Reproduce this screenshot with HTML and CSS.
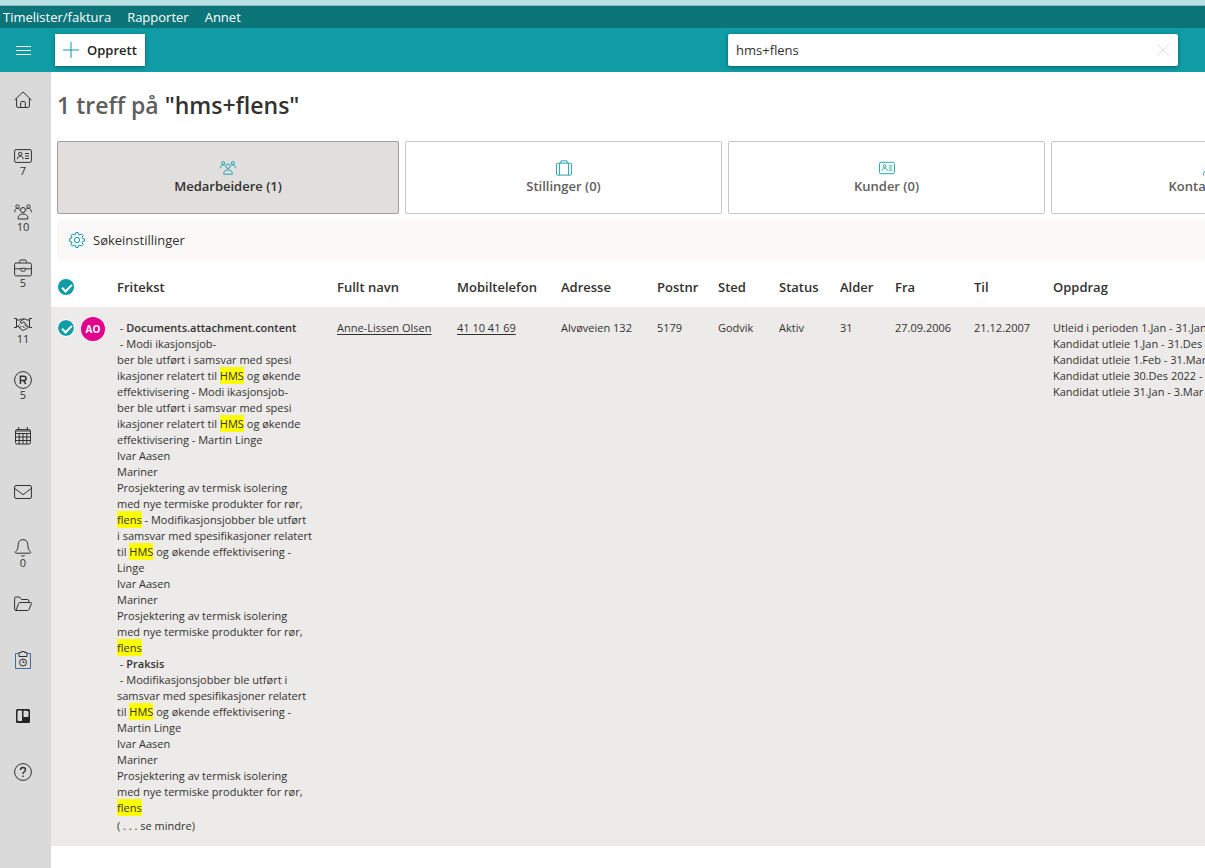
FILE: index.html
```
<!DOCTYPE html>
<html lang="no">

	<head>
		<meta charset="UTF-8">
		<meta name="viewport" content="width=device-width, initial-scale=1">
		<title>Søk</title>
		<link rel="stylesheet" href="styles.css">
	</head>

	<body>
		<!-- shared icons -->
		<svg class="defs" width="0" height="0">
			<symbol id="people" viewBox="0 0 18 18">
				<circle cx="9" cy="7" r="2.5" />
				<circle cx="3.5" cy="3.5" r="1.7" />
				<circle cx="14.5" cy="3.5" r="1.7" />
				<path d="M.6 9.2c0-2.6 1.2-3.8 3-3.8 1 0 1.700.4 2.200 1M17.400 9.200c0-2.600-1.200-3.800-3-3.800-1 0-1.700.4-2.200 1M4.200 16c-.5-2.700 1.400-5 4.800-5s5.300 2.300 4.800 5z" />
			</symbol>
			<symbol id="card" viewBox="0 0 18 18">
				<rect x=".6" y="2.600" width="16.800" height="12.800" rx="1.500" />
				<circle cx="6.300" cy="7" r="1.700" />
				<path d="M3.500 12.200c0-2 1-3 2.800-3s2.800 1 2.800 3M11 6.500h4M11 9h4M11 11.500h4" />
			</symbol>
		</svg>

		<div class="strip"></div>
		<nav class="menubar">
			<a href="#">Timelister/faktura</a>
			<a href="#">Rapporter</a>
			<a href="#">Annet</a>
		</nav>
		<header class="header">
			<button class="burger" aria-label="Meny">
				<svg width="15" height="11" viewBox="0 0 15 11"><path d="M0 1.500h15M0 5.500h15M0 9.500h15" /></svg>
			</button>
			<button class="create">
				<svg width="16" height="16" viewBox="0 0 16 16"><path d="M8 0v16M0 8h16" /></svg>
				Opprett
			</button>
			<div class="search">
				<input type="text" aria-label="Søk" value="hms+flens">
				<button aria-label="Tøm søk">
					<svg width="14" height="14" viewBox="0 0 14 14"><path d="M1 1l12 12M13 1L1 13" /></svg>
				</button>
			</div>
		</header>

		<div class="page">
			<nav class="sidebar">
				<a href="#" aria-label="Hjem">
					<svg viewBox="0 0 18 18"><path d="M.5 9L9 1l8.500 8M2.600 7.500v7.500q0 1.500 1.500 1.500h9.800q1.500 0 1.500-1.500V7.500M6.700 16.500v-5q0-1 1-1h2.600q1 0 1 1v5" /></svg>
				</a>
				<a href="#">
					<svg><use href="#card" /></svg>
					<span>7</span>
				</a>
				<a href="#">
					<svg><use href="#people" /></svg>
					<span>10</span>
				</a>
				<a href="#">
					<svg viewBox="0 0 18 18"><rect x=".6" y="4" width="16.800" height="12.900" rx="1.500" /><path d="M5.500 4V2.500q0-1.500 1.500-1.500h4q1.500 0 1.500 1.500V4M.6 9.800h6M11.400 9.800h6M6.600 9.300h4.800v1.200q0 1.700-1.700 1.700H8.300q-1.700 0-1.700-1.700z" /></svg>
					<span>5</span>
				</a>
				<a href="#">
					<svg viewBox="0 0 18 18"><path d="M0 3.500h2.500v9H0M18 3.500h-2.500v9H18M2.500 5h3l2-1h3.500l2 1h2.500M2.500 11.500h1.500l4 3.500q1.300 1 2.200-.3 1.400.4 1.900-.9 1.400 0 1.600-1.400l1.800-.9M10 4L6.200 6.500q-.2 2 1.800 1.700l2-1.400 4 5M8.800 11l1.800 2.200M10.500 9.500l2 2.300M4 11.500l1.500-2M5.600 13l1.700-2" /></svg>
					<span>11</span>
				</a>
				<a href="#">
					<svg viewBox="0 0 18 18"><circle cx="9" cy="9" r="8.400" /><path stroke-width="1.500" d="M6.400 13V5.200h3.200q2.500 0 2.500 2.200T9.600 9.600H6.400M9.600 9.600l2.200 3.400" /></svg>
					<span>5</span>
				</a>
				<a href="#" aria-label="Kalender">
					<svg viewBox="0 0 18 18"><rect x="1.500" y="2.600" width="15" height="14.400" rx="1.500" /><path d="M1.500 6.500h15M1.500 10h15M1.500 13.500h15M5.200 6.500V17M9 6.500V17M12.800 6.500V17M4.700 0v3M13.300 0v3M2 4h14" /></svg>
				</a>
				<a href="#" aria-label="E-post">
					<svg viewBox="0 0 18 18"><rect x=".6" y="2.500" width="16.800" height="13" rx="1.500" /><path d="M.8 5.500L9 11.700l8.200-6.200" /></svg>
				</a>
				<a href="#">
					<svg viewBox="0 0 18 18"><path d="M9 .6c-3 0-4.800 2.200-4.800 5 0 4-1 5.400-2.600 7.200-.5.700-.2 1.400.6 1.400h13.600c.8 0 1.100-.7.6-1.400-1.600-1.800-2.600-3.200-2.600-7.200 0-2.800-1.800-5-4.800-5zM7.300 16.500q1.700 1.500 3.400 0" /></svg>
					<span>0</span>
				</a>
				<a href="#" aria-label="Filer">
					<svg viewBox="0 0 18 18"><path d="M2 15.500h11.700q1 0 1.300-.8l2.400-6q.3-1.200-.8-1.200H6q-1.200 0-1.500 1L2 15.500q-1.400 0-1.400-1.500V3.500Q.6 2 2 2h3.500l2 2.500h6q1.400 0 1.400 1.500v1.500" /></svg>
				</a>
				<a href="#" aria-label="Timer">
					<svg viewBox="0 0 18 18"><path class="board" d="M4.500 2.500H1.500v15h15v-15h-3" /><path d="M5 5.500v-4h2.500v-1h3v1H13v4z" /><circle cx="9" cy="11.500" r="3.500" /><path d="M9 9.500v2h1.700" /></svg>
				</a>
				<a href="#" aria-label="Tavle">
					<svg viewBox="0 0 18 18"><path fill-rule="evenodd" class="solid" d="M3.500 2h11Q16 2 16 3.500v11q0 1.500-1.500 1.500h-11Q2 16 2 14.500v-11Q2 2 3.500 2zm1 1.500q-1 0-1 1v8.500q0 1 1 1h3q.5 0 .5-.5V4q0-.5-.5-.5zm5.500 0q-.5 0-.5.500v5.500q0 .5.5.5h3.500q1 0 1-1v-4q0-1-1-1z" /></svg>
				</a>
				<a href="#" aria-label="Hjelp">
					<svg viewBox="0 0 18 18"><circle cx="9" cy="9" r="8.400" /><path stroke-width="1.400" d="M6.500 7q0-2.500 2.500-2.500T11.500 7Q11.500 8 10 9 9 9.700 9 11M9 12.500V14" /></svg>
				</a>
			</nav>

			<main class="main">
				<h1>1 treff på <b>"hms+flens"</b></h1>

				<div class="tabs">
					<button class="tab active">
						<svg><use href="#people" /></svg>
						Medarbeidere (1)
					</button>
					<button class="tab">
						<svg viewBox="0 0 18 18"><rect x=".6" y="3.600" width="16.800" height="13.400" rx="1" /><path d="M5.500 3.500V1h7v2.500M4 3.500V17M14 3.500V17" /></svg>
						Stillinger (0)
					</button>
					<button class="tab">
						<svg><use href="#card" /></svg>
						Kunder (0)
					</button>
					<button class="tab">
						<svg viewBox="0 0 18 18"><circle cx="9" cy="5" r="4.200" /><path d="M1.500 17.500c0-4.500 2.500-7 7.500-7s7.500 2.500 7.500 7" /></svg>
						Kontakter (0)
					</button>
				</div>

				<button class="settings">
					<svg width="16" height="16" viewBox="0 0 16 16"><path d="M6.800.6h2.400l.4 1.800 1.300.5 1.600-1 1.600 1.600-1 1.600.5 1.300 1.800.4v2.400l-1.800.4-.5 1.300 1 1.600-1.600 1.600-1.600-1-1.300.5-.4 1.800H6.800l-.4-1.800-1.300-.5-1.600 1-1.600-1.600 1-1.600-.5-1.300L.6 9.200V6.800l1.800-.4.5-1.300-1-1.600 1.600-1.600 1.600 1 1.300-.5z" /><circle cx="8" cy="8" r="2.600" /></svg>
					Søkeinstillinger
				</button>

				<table class="list">
					<colgroup>
						<col class="w-check">
						<col class="w-avatar">
						<col class="w-text">
						<col class="w-name">
						<col class="w-phone">
						<col class="w-address">
						<col class="w-small">
						<col class="w-small">
						<col class="w-small">
						<col class="w-age">
						<col class="w-date">
						<col class="w-date">
						<col>
					</colgroup>
					<thead>
						<tr>
							<th><input type="checkbox" aria-label="Velg alle" checked></th>
							<th></th>
							<th>Fritekst</th>
							<th>Fullt navn</th>
							<th>Mobiltelefon</th>
							<th>Adresse</th>
							<th>Postnr</th>
							<th>Sted</th>
							<th>Status</th>
							<th>Alder</th>
							<th>Fra</th>
							<th>Til</th>
							<th>Oppdrag</th>
						</tr>
					</thead>
					<tbody>
						<tr>
							<td><input type="checkbox" aria-label="Velg Anne-Lissen Olsen" checked></td>
							<td><span class="avatar">AO</span></td>
							<td>
								&nbsp;- <b>Documents.attachment.content</b><br>
								&nbsp;- Modi ikasjonsjob-<br>
								ber ble utført i samsvar med spesi<br>
								ikasjoner relatert til <mark>HMS</mark> og økende<br>
								effektivisering - Modi ikasjonsjob-<br>
								ber ble utført i samsvar med spesi<br>
								ikasjoner relatert til <mark>HMS</mark> og økende<br>
								effektivisering - Martin Linge<br>
								Ivar Aasen<br>
								Mariner<br>
								Prosjektering av termisk isolering<br>
								med nye termiske produkter for rør,<br>
								<mark>flens</mark> - Modifikasjonsjobber ble utført<br>
								i samsvar med spesifikasjoner relatert<br>
								til <mark>HMS</mark> og økende effektivisering -<br>
								Linge<br>
								Ivar Aasen<br>
								Mariner<br>
								Prosjektering av termisk isolering<br>
								med nye termiske produkter for rør,<br>
								<mark>flens</mark><br>
								&nbsp;- <b>Praksis</b><br>
								&nbsp;- Modifikasjonsjobber ble utført i<br>
								samsvar med spesifikasjoner relatert<br>
								til <mark>HMS</mark> og økende effektivisering -<br>
								Martin Linge<br>
								Ivar Aasen<br>
								Mariner<br>
								Prosjektering av termisk isolering<br>
								med nye termiske produkter for rør,<br>
								<mark>flens</mark>
								<button class="less">( . . . se mindre)</button>
							</td>
							<td><a href="#">Anne-Lissen Olsen</a></td>
							<td><a href="#">41 10 41 69</a></td>
							<td>Alvøveien 132</td>
							<td>5179</td>
							<td>Godvik</td>
							<td>Aktiv</td>
							<td>31</td>
							<td>27.09.2006</td>
							<td>21.12.2007</td>
							<td>
								Utleid i perioden 1.Jan - 31.Jan<br>
								Kandidat utleie 1.Jan - 31.Des<br>
								Kandidat utleie 1.Feb - 31.Mar<br>
								Kandidat utleie 30.Des 2022 - 31.Jan<br>
								Kandidat utleie 31.Jan - 3.Mar
							</td>
						</tr>
					</tbody>
				</table>
			</main>
		</div>
	</body>

</html>
```
FILE: styles.css
```
* {
	box-sizing: border-box;
	margin: 0;
	padding: 0;
}

body {
	min-height: 100vh;
	display: flex;
	flex-direction: column;
	overflow-x: hidden;
	background: #fff;
	color: #323130;
	font-family: "Segoe UI", "Open Sans", sans-serif;
	font-size: 13px;
}

button,
input {
	border: 0;
	background: none;
	color: inherit;
	font: inherit;
}

svg {
	display: block;
	fill: none;
	stroke: currentColor;
}

.defs {
	position: absolute;
}

/* top */
.strip {
	height: 6px;
	background: #b8e1e6;
	border-bottom: 1px solid #8fb9bc;
}

.menubar {
	height: 22px;
	padding: 0 3px;
	display: flex;
	gap: 16px;
	background: #0b757a;
	line-height: 22px;
}

.menubar a {
	color: #fff;
	text-decoration: none;
}

.header {
	height: 44px;
	padding-right: 27px;
	display: flex;
	align-items: center;
	background: #0f9ca5;
}

.burger {
	width: 55px;
	height: 44px;
	padding-left: 16px;
	color: #fff;
}

.create {
	height: 32px;
	padding: 0 8px;
	display: flex;
	align-items: center;
	gap: 8px;
	background: #fff;
	color: #201f1e;
	font-weight: 600;
	box-shadow: 0 1px 4px rgba(0, 0, 0, .4);
}

.create svg {
	color: #0f9ca5;
}

.search {
	width: 450px;
	height: 32px;
	margin-left: auto;
	padding: 0 8px;
	display: flex;
	align-items: center;
	background: #fff;
	border-radius: 2px;
	box-shadow: 0 1px 4px rgba(0, 0, 0, .4);
}

.search input {
	flex: 1;
	outline: 0;
}

.search button {
	color: #e1dfdd;
}

.page {
	flex: 1;
	display: flex;
}

/* sidebar */
.sidebar {
	flex: none;
	width: 51px;
	padding-right: 5px;
	background: #dadada;
}

.sidebar a {
	height: 56px;
	padding-top: 19px;
	display: flex;
	flex-direction: column;
	align-items: center;
	color: #323130;
	font-size: 11px;
	line-height: 12px;
	text-decoration: none;
}

.sidebar svg {
	width: 18px;
	height: 18px;
}

.sidebar .board {
	stroke: #3c6ea0;
}

.sidebar .solid {
	fill: #252423;
	stroke: none;
}

/* content */
.main {
	flex: 1;
	min-width: 0;
	overflow: hidden;
}

h1 {
	padding: 17px 6px 20px;
	color: #605e5c;
	font-size: 23px;
	line-height: 32px;
	font-weight: 600;
}

h1 b {
	color: #323130;
	font-weight: 600;
}

.tabs {
	padding-left: 6px;
	display: grid;
	grid-template-columns: minmax(342px, 1fr) repeat(3, minmax(317px, 1fr));
	gap: 6px;
}

.tab {
	height: 73px;
	display: flex;
	flex-direction: column;
	align-items: center;
	justify-content: center;
	border: 1px solid #c8c6c4;
	border-radius: 2px;
	color: #605e5c;
	font-weight: 600;
	line-height: 20px;
}

.tab svg {
	width: 16px;
	height: 16px;
	color: #0f9ca5;
}

.tab.active {
	background: #e1dfdd;
	border-color: #a19f9d;
	color: #323130;
}

.settings {
	width: 100%;
	height: 40px;
	margin: 6px 6px 7px;
	padding: 0 12px;
	display: flex;
	align-items: center;
	gap: 8px;
	background: #faf9f8;
	border-radius: 2px;
}

.settings svg {
	color: #0f9ca5;
}

/* list */
.list {
	width: 100%;
	table-layout: fixed;
	border-collapse: collapse;
	text-align: left;
	white-space: nowrap;
}

.w-check { width: 30px; }
.w-avatar { width: 36px; }
.w-text { width: 220px; }
.w-name { width: 120px; }
.w-phone { width: 104px; }
.w-address { width: 96px; }
.w-small { width: 61px; }
.w-age { width: 55px; }
.w-date { width: 79px; }

.list th {
	height: 40px;
	font-weight: 600;
}

.list td {
	padding: 13px 0 12px;
	background: #edebe9;
	font-size: 11px;
	line-height: 16px;
	vertical-align: top;
}

.list b {
	font-weight: 600;
}

.list a {
	color: inherit;
	text-underline-offset: 2px;
}

.list mark {
	padding: 1px 0;
	background: #ff0;
	color: inherit;
}

.list input {
	appearance: none;
	width: 16px;
	height: 16px;
	margin-left: 7px;
	display: block;
	background: #0f9ca5;
	border-radius: 50%;
}

.list td input {
	outline: 1px solid #fff;
}

.list input::before {
	content: "";
	width: 8px;
	height: 4px;
	margin: 5px 4px;
	display: block;
	border: solid #fff;
	border-width: 0 0 2px 2px;
	transform: rotate(-45deg);
}

.avatar {
	width: 24px;
	height: 24px;
	margin-top: -3px;
	display: block;
	background: #e3008c;
	border-radius: 50%;
	color: #fff;
	font-size: 10px;
	font-weight: 700;
	line-height: 24px;
	text-align: center;
}

.less {
	margin-top: 2px;
	display: block;
}
```
